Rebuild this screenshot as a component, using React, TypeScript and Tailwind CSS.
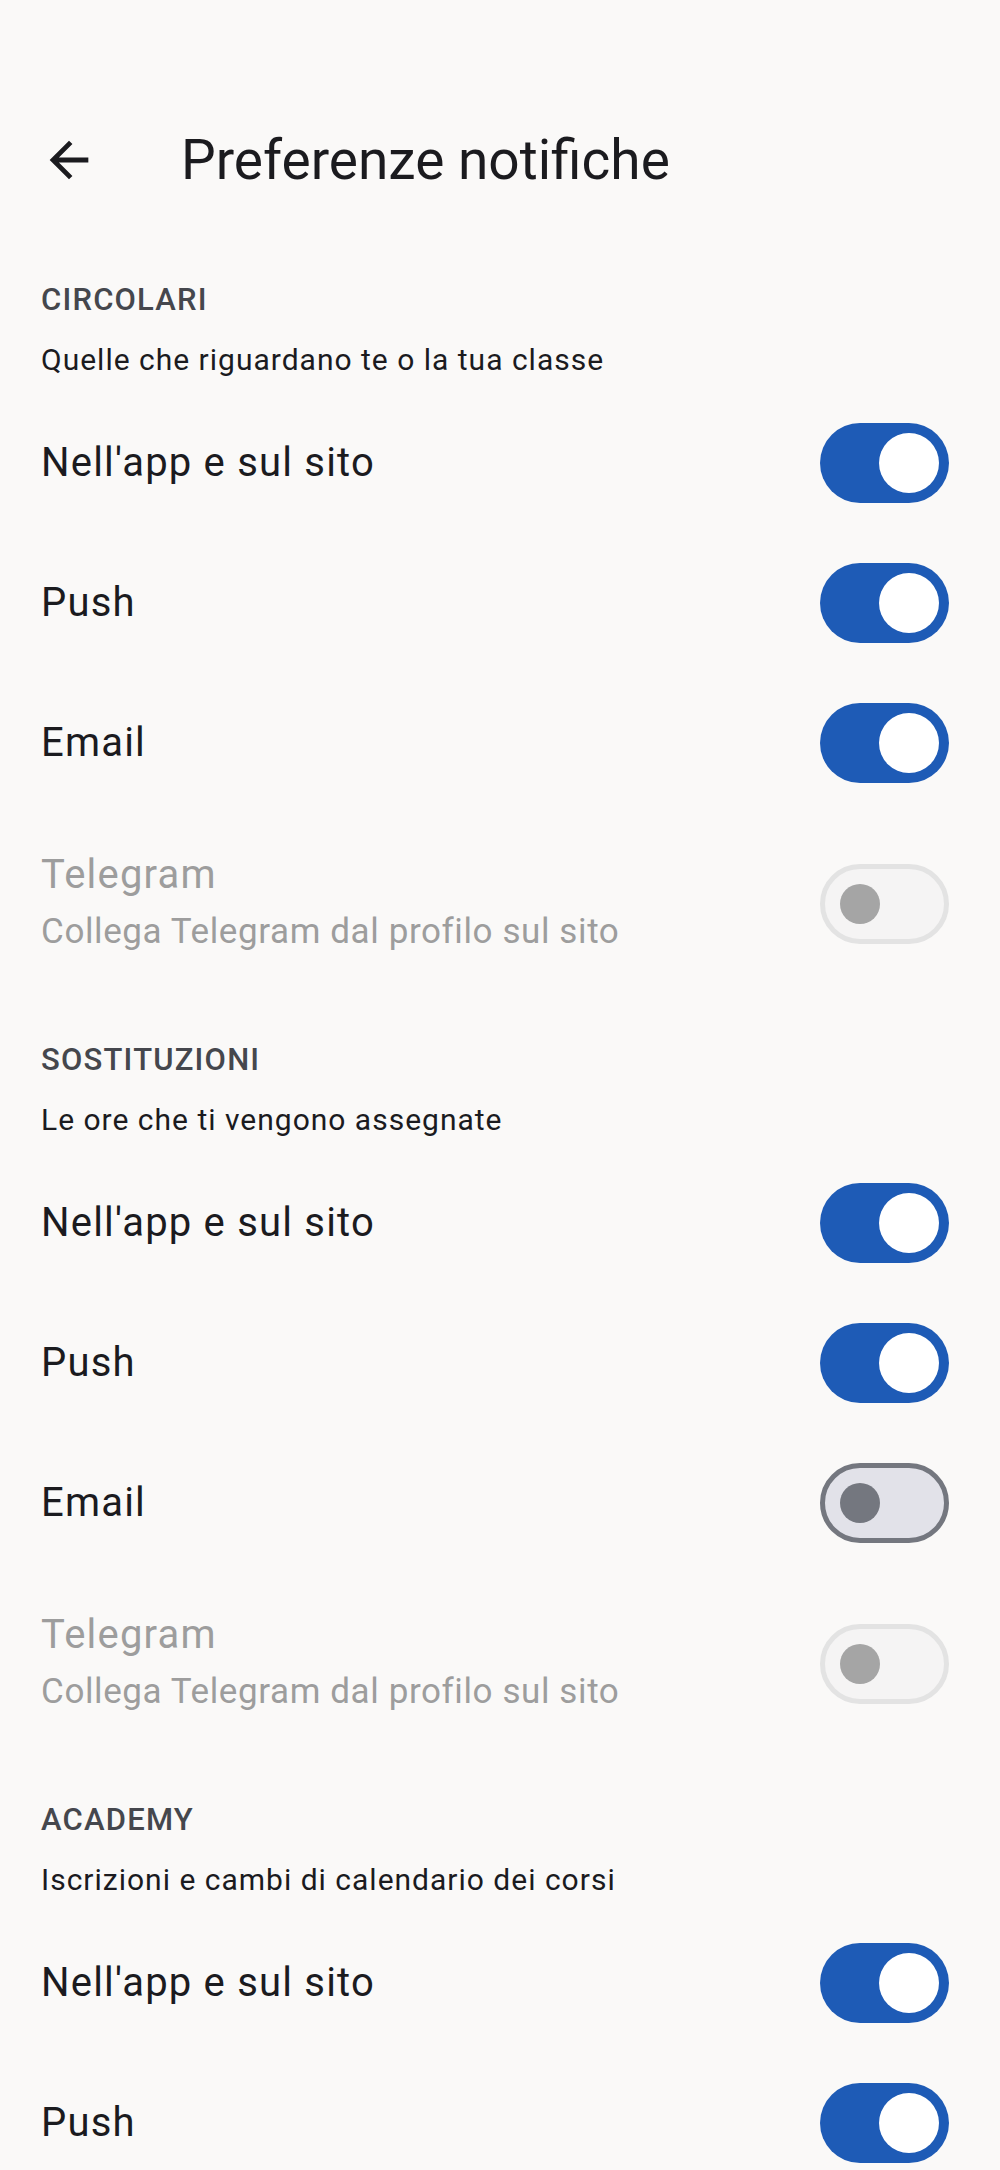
type Mode = "on" | "off" | "disabled";

interface RowType {
  label: string;
  mode: Mode;
  sub?: string;
}

interface SectionType {
  title: string;
  subtitle: string;
  rows: RowType[];
}

const telegram: RowType = {
  label: "Telegram",
  mode: "disabled",
  sub: "Collega Telegram dal profilo sul sito",
};

const sections: SectionType[] = [
  {
    title: "CIRCOLARI",
    subtitle: "Quelle che riguardano te o la tua classe",
    rows: [
      { label: "Nell'app e sul sito", mode: "on" },
      { label: "Push", mode: "on" },
      { label: "Email", mode: "on" },
      telegram,
    ],
  },
  {
    title: "SOSTITUZIONI",
    subtitle: "Le ore che ti vengono assegnate",
    rows: [
      { label: "Nell'app e sul sito", mode: "on" },
      { label: "Push", mode: "on" },
      { label: "Email", mode: "off" },
      telegram,
    ],
  },
  {
    title: "ACADEMY",
    subtitle: "Iscrizioni e cambi di calendario dei corsi",
    rows: [
      { label: "Nell'app e sul sito", mode: "on" },
      { label: "Push", mode: "on" },
      { label: "Email", mode: "on" },
      telegram,
    ],
  },
];

function Switch({ mode }: { mode: Mode }) {
  if (mode === "on") {
    return (
      <div className="flex h-[80px] w-[129px] shrink-0 items-center justify-end rounded-full bg-[#1e5bb6] pr-[10px]">
        <div className="h-[60px] w-[60px] rounded-full bg-white" />
      </div>
    );
  }
  if (mode === "off") {
    return (
      <div className="flex h-[80px] w-[129px] shrink-0 items-center rounded-full border-[5px] border-[#74777f] bg-[#e2e2e9] pl-[15px]">
        <div className="h-[40px] w-[40px] rounded-full bg-[#74777f]" />
      </div>
    );
  }
  return (
    <div className="flex h-[80px] w-[129px] shrink-0 items-center rounded-full border-[5px] border-[#e3e3e3] bg-[#f5f4f4] pl-[15px]">
      <div className="h-[40px] w-[40px] rounded-full bg-[#a5a5a5]" />
    </div>
  );
}

function Row({ row }: { row: RowType }) {
  const disabled = row.mode === "disabled";
  return (
    <div
      className={
        "flex items-center justify-between pl-[41px] pr-[51px] " +
        (row.sub ? "h-[178px] pt-[3px]" : "h-[140px]")
      }
    >
      <div className="flex flex-col">
        <span
          className={
            "text-[40px] leading-[50px] tracking-[1.2px] " +
            (disabled ? "text-[#9d9d9d]" : "text-[#1b1b1f]")
          }
        >
          {row.label}
        </span>
        {row.sub && (
          <span className="mt-[7px] text-[35px] leading-[50px] tracking-[0.6px] text-[#9d9d9d]">
            {row.sub}
          </span>
        )}
      </div>
      <Switch mode={row.mode} />
    </div>
  );
}

export default function App() {
  return (
    <div
      className="min-h-screen w-full bg-[#faf9f8]"
      style={{ fontFamily: "Roboto, 'Noto Sans', sans-serif" }}
    >
      <div className="h-[92px]" />
      <div className="flex h-[136px] items-center">
        <div className="ml-[40px] flex h-[58px] w-[58px] items-center justify-center">
          <svg viewBox="0 0 24 24" className="h-[58px] w-[58px]" fill="#1b1b1f">
            <path d="M20 11H7.83l5.59-5.59L12 4l-8 8 8 8 1.41-1.41L7.83 13H20v-2z" />
          </svg>
        </div>
        <h1 className="ml-[83px] text-[55px] leading-[64px] text-[#1b1b1f]">
          Preferenze notifiche
        </h1>
      </div>

      <div className="pt-[3px]">
        {sections.map((section) => (
          <div key={section.title} className="pt-[47px]">
            <div className="flex h-[44px] items-center px-[41px] text-[31px] font-medium tracking-[1.2px] text-[#45474d]">
              {section.title}
            </div>
            <div className="mt-[17px] flex h-[40px] items-center px-[41px] text-[30px] tracking-[1px] text-[#1b1b1f]">
              {section.subtitle}
            </div>
            <div className="mt-[14px]">
              {section.rows.map((row) => (
                <Row key={row.label} row={row} />
              ))}
            </div>
          </div>
        ))}
      </div>
    </div>
  );
}
